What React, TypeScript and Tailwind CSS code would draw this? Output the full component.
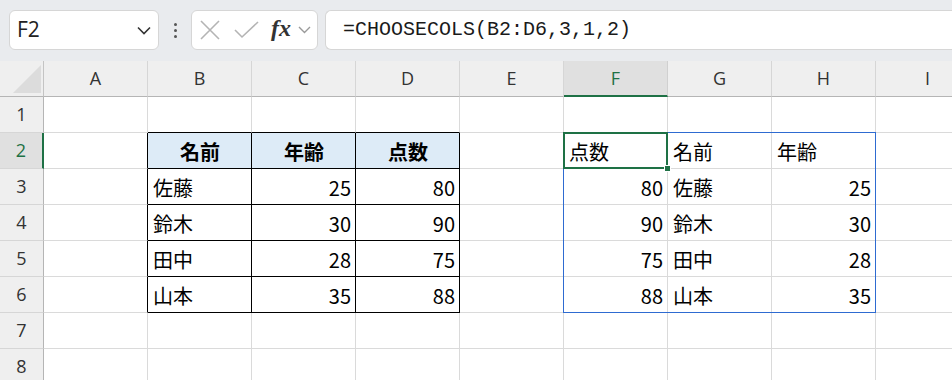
import React from "react";

const COLS = ["A", "B", "C", "D", "E", "F", "G", "H", "I"];
const ROWS = [1, 2, 3, 4, 5, 6, 7, 8];

type Cell = { text: string; bold?: boolean; align: "left" | "right" | "center"; head?: boolean };

const cells: Record<string, Cell> = {
  B2: { text: "名前", bold: true, align: "center", head: true },
  C2: { text: "年齢", bold: true, align: "center", head: true },
  D2: { text: "点数", bold: true, align: "center", head: true },
  B3: { text: "佐藤", align: "left" },
  C3: { text: "25", align: "right" },
  D3: { text: "80", align: "right" },
  B4: { text: "鈴木", align: "left" },
  C4: { text: "30", align: "right" },
  D4: { text: "90", align: "right" },
  B5: { text: "田中", align: "left" },
  C5: { text: "28", align: "right" },
  D5: { text: "75", align: "right" },
  B6: { text: "山本", align: "left" },
  C6: { text: "35", align: "right" },
  D6: { text: "88", align: "right" },
  F2: { text: "点数", align: "left" },
  G2: { text: "名前", align: "left" },
  H2: { text: "年齢", align: "left" },
  F3: { text: "80", align: "right" },
  G3: { text: "佐藤", align: "left" },
  H3: { text: "25", align: "right" },
  F4: { text: "90", align: "right" },
  G4: { text: "鈴木", align: "left" },
  H4: { text: "30", align: "right" },
  F5: { text: "75", align: "right" },
  G5: { text: "田中", align: "left" },
  H5: { text: "28", align: "right" },
  F6: { text: "88", align: "right" },
  G6: { text: "山本", align: "left" },
  H6: { text: "35", align: "right" },
};

const inTable = (c: string) => c === "B" || c === "C" || c === "D";

const Toolbar = () => (
  <div className="h-[61px] bg-[#e9ebee] flex items-start pt-[10px] pl-[9px]">
    <div className="w-[150px] h-[40px] bg-white rounded-[6px] border border-[#d6d6d6] flex items-center justify-between pl-[7px] pr-[7px]">
      <span className="text-[21px] text-[#222] font-['Open_Sans',sans-serif]">F2</span>
      <svg width="14" height="9" viewBox="0 0 14 9" fill="none">
        <path d="M1 1.5 L7 7.5 L13 1.5" stroke="#333" strokeWidth="1.6" />
      </svg>
    </div>
    <div className="w-[32px] h-[40px] flex flex-col items-center justify-center gap-[3px]">
      <span className="w-[3px] h-[3px] bg-[#555] rounded-full" />
      <span className="w-[3px] h-[3px] bg-[#555] rounded-full" />
      <span className="w-[3px] h-[3px] bg-[#555] rounded-full" />
    </div>
    <div className="w-[127px] h-[40px] bg-white rounded-[6px] border border-[#d6d6d6] flex items-center pl-[8px]">
      <svg width="20" height="20" viewBox="0 0 20 20" fill="none">
        <path d="M1 1 L19 19 M19 1 L1 19" stroke="#b4b4b4" strokeWidth="1.6" />
      </svg>
      <svg className="ml-[14px]" width="25" height="18" viewBox="0 0 25 18" fill="none">
        <path d="M1 9 L8 16 L24 1" stroke="#b4b4b4" strokeWidth="1.6" />
      </svg>
      <span className="ml-[12px] text-[24px] italic font-semibold text-[#333] font-['Liberation_Serif',serif] leading-none -mt-[4px]">
        fx
      </span>
      <svg className="ml-[7px]" width="13" height="8" viewBox="0 0 13 8" fill="none">
        <path d="M1 1 L6.5 6.5 L12 1" stroke="#9a9a9a" strokeWidth="1.4" />
      </svg>
    </div>
    <div className="ml-[7px] flex-1 h-[40px] bg-white rounded-l-[6px] border border-r-0 border-[#d6d6d6] flex items-center pl-[17px]">
      <span className="text-[20px] text-[#1a1a1a] font-['Liberation_Mono',monospace]">
        =CHOOSECOLS(B2:D6,3,1,2)
      </span>
    </div>
  </div>
);

const Grid = () => (
  <div className="relative">
    <div className="grid grid-cols-[44px_repeat(9,104px)] grid-rows-[36px_repeat(8,36px)] font-['Noto_Sans_CJK_JP',sans-serif]">
      <div className="bg-[#efefef] border-r border-b border-r-[#c4c4c4] border-b-[#b5b5b5] relative">
        <svg className="absolute left-[13px] top-[4px]" width="28" height="28" viewBox="0 0 28 28">
          <polygon points="28,0 28,28 0,28" fill="#dcdcdc" />
        </svg>
      </div>
      {COLS.map((c) => (
        <div
          key={c}
          className={
            c === "F"
              ? "bg-[#e0e0e0] border-r border-r-[#d0d0d0] border-b-2 border-b-[#1e7145] flex items-center justify-center text-[18px] text-[#1e7145] font-['Open_Sans',sans-serif]"
              : "bg-[#efefef] border-r border-r-[#d6d6d6] border-b border-b-[#b5b5b5] flex items-center justify-center text-[18px] text-[#333] font-['Open_Sans',sans-serif]"
          }
        >
          {c}
        </div>
      ))}
      {ROWS.map((r) => (
        <React.Fragment key={r}>
          <div
            className={
              r === 2
                ? "bg-[#e0e0e0] border-r-2 border-r-[#1e7145] border-b border-b-[#d6d6d6] flex items-center justify-center text-[18px] text-[#1e7145] font-['Open_Sans',sans-serif]"
                : "bg-[#efefef] border-r border-r-[#b5b5b5] border-b border-b-[#d6d6d6] flex items-center justify-center text-[18px] text-[#333] font-['Open_Sans',sans-serif]"
            }
          >
            {r}
          </div>
          {COLS.map((c) => {
            const tableRow = r >= 2 && r <= 6;
            const rightBlack = tableRow && (c === "A" || inTable(c));
            const bottomBlack = inTable(c) && r >= 1 && r <= 6;
            const cell = cells[c + r];
            return (
              <div
                key={c + r}
                className={[
                  "border-r border-b flex items-center pl-[5px] pr-[4px] pt-[2px] text-[20px] text-black overflow-hidden whitespace-nowrap",
                  rightBlack ? "border-r-black" : "border-r-[#dadada]",
                  bottomBlack ? "border-b-black" : "border-b-[#dadada]",
                  cell?.head ? "bg-[#ddebf7]" : "bg-white",
                  cell?.bold ? "font-bold" : "font-normal",
                  cell?.align === "right"
                    ? "justify-end"
                    : cell?.align === "center"
                    ? "justify-center"
                    : "justify-start",
                ].join(" ")}
              >
                {cell?.text}
              </div>
            );
          })}
        </React.Fragment>
      ))}
    </div>
    {/* spill range outline */}
    <div className="absolute left-[563px] top-[71px] w-[313px] h-[181px] border border-[#2e6bd1] pointer-events-none" />
    {/* active cell */}
    <div className="absolute left-[563px] top-[71px] w-[105px] h-[37px] border-2 border-[#1e7145] pointer-events-none" />
    <div className="absolute left-[664px] top-[104px] w-[7px] h-[7px] bg-[#1e7145] border border-white pointer-events-none" />
  </div>
);

export default function App() {
  return (
    <div className="w-[952px] h-[380px] overflow-hidden bg-white">
      <Toolbar />
      <Grid />
    </div>
  );
}
